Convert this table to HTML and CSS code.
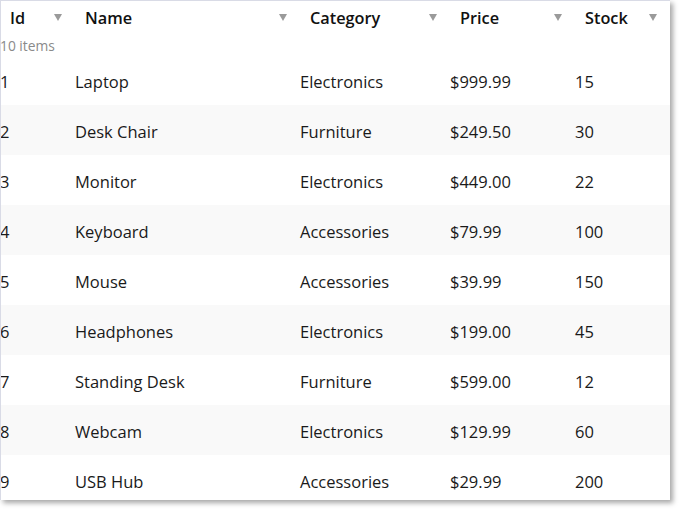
FILE: index.html
```html
<!DOCTYPE html>
<html>
<head>
<meta charset="utf-8">
<link rel="stylesheet" href="styles.css">
</head>
<body>
<div class="window">
  <div class="grid">
    <div class="head">
      <div class="hcell c-id"><span>Id</span><i class="arrow"></i></div>
      <div class="hcell c-name"><span>Name</span><i class="arrow"></i></div>
      <div class="hcell c-cat"><span>Category</span><i class="arrow"></i></div>
      <div class="hcell c-price"><span>Price</span><i class="arrow"></i></div>
      <div class="hcell c-stock"><span>Stock</span><i class="arrow"></i></div>
    </div>
    <div class="count">10 items</div>
    <div class="row"><div class="c-id">1</div><div class="c-name">Laptop</div><div class="c-cat">Electronics</div><div class="c-price">$999.99</div><div class="c-stock">15</div></div>
    <div class="row alt"><div class="c-id">2</div><div class="c-name">Desk Chair</div><div class="c-cat">Furniture</div><div class="c-price">$249.50</div><div class="c-stock">30</div></div>
    <div class="row"><div class="c-id">3</div><div class="c-name">Monitor</div><div class="c-cat">Electronics</div><div class="c-price">$449.00</div><div class="c-stock">22</div></div>
    <div class="row alt"><div class="c-id">4</div><div class="c-name">Keyboard</div><div class="c-cat">Accessories</div><div class="c-price">$79.99</div><div class="c-stock">100</div></div>
    <div class="row"><div class="c-id">5</div><div class="c-name">Mouse</div><div class="c-cat">Accessories</div><div class="c-price">$39.99</div><div class="c-stock">150</div></div>
    <div class="row alt"><div class="c-id">6</div><div class="c-name">Headphones</div><div class="c-cat">Electronics</div><div class="c-price">$199.00</div><div class="c-stock">45</div></div>
    <div class="row"><div class="c-id">7</div><div class="c-name">Standing Desk</div><div class="c-cat">Furniture</div><div class="c-price">$599.00</div><div class="c-stock">12</div></div>
    <div class="row alt"><div class="c-id">8</div><div class="c-name">Webcam</div><div class="c-cat">Electronics</div><div class="c-price">$129.99</div><div class="c-stock">60</div></div>
    <div class="row"><div class="c-id">9</div><div class="c-name">USB Hub</div><div class="c-cat">Accessories</div><div class="c-price">$29.99</div><div class="c-stock">200</div></div>
  </div>
</div>
</body>
</html>
```

FILE: styles.css
```css
html, body {
  margin: 0;
  padding: 0;
  background: #ffffff;
}
body {
  width: 679px;
  height: 509px;
  overflow: hidden;
  font-family: "Open Sans", "Noto Sans", sans-serif;
  color: #1a1a1a;
}
.window {
  width: 670px;
  height: 500px;
  box-sizing: border-box;
  border-top: 1px solid #d9dbe6;
  border-left: 1px solid #d9dbe6;
  background: #ffffff;
  box-shadow: 3px 3px 5px rgba(0, 0, 0, 0.35);
  overflow: hidden;
}
.grid {
  margin-left: -1px;
  margin-top: -1px;
}
.head, .row {
  display: grid;
  grid-template-columns: 75px 225px 150px 125px 95px;
}
.head {
  height: 35px;
  align-items: center;
}
.hcell {
  display: flex;
  align-items: center;
  justify-content: space-between;
  padding: 0 13px 0 10px;
  font-weight: 600;
  font-size: 16.3px;
  color: #111111;
}
.arrow {
  width: 0;
  height: 0;
  border-left: 4px solid transparent;
  border-right: 4px solid transparent;
  border-top: 7px solid #9a9a9a;
}
.count {
  box-sizing: border-box;
  height: 20px;
  padding-top: 1px;
  font-size: 13.8px;
  line-height: 20px;
  color: #8a8a8a;
}
.row {
  box-sizing: border-box;
  height: 50px;
  padding-top: 2px;
  align-items: center;
  font-size: 16.5px;
}
.row.alt {
  background: #f9f9f9;
}
```
